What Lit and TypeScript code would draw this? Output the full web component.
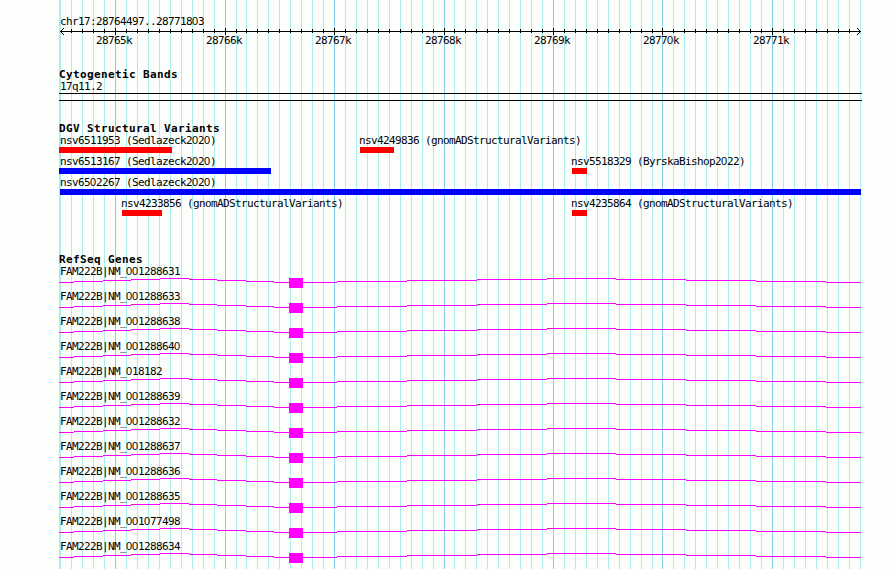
import { LitElement, html, svg, css } from "lit";
import { customElement } from "lit/decorators.js";
import { styleMap } from "lit/directives/style-map.js";

const WIDTH = 890;
const HEIGHT = 569;

// Pixel column of the n-th 100 bp mark, counted from 28,765,000.
const markX = (n: number) => 115 + 11 * n - Math.floor((n + 7) / 19);
const MARKS = Array.from({ length: 74 }, (_, i) => i - 5);

interface Feature { name: string; start: number; end: number; text: number; color: string; }

const ROWS: Feature[][] = [
  [
    { name: "nsv6511953 (Sedlazeck2020)", start: 59, end: 172, text: 60, color: "#ff0000" },
    { name: "nsv4249836 (gnomADStructuralVariants)", start: 360, end: 394, text: 359, color: "#ff0000" },
  ],
  [
    { name: "nsv6513167 (Sedlazeck2020)", start: 59, end: 271, text: 60, color: "#0000ff" },
    { name: "nsv5518329 (ByrskaBishop2022)", start: 572, end: 587, text: 571, color: "#ff0000" },
  ],
  [{ name: "nsv6502267 (Sedlazeck2020)", start: 60, end: 861, text: 60, color: "#0000ff" }],
  [
    { name: "nsv4233856 (gnomADStructuralVariants)", start: 122, end: 162, text: 121, color: "#ff0000" },
    { name: "nsv4235864 (gnomADStructuralVariants)", start: 572, end: 587, text: 571, color: "#ff0000" },
  ],
];

const GENES = [
  "NM_001288631", "NM_001288633", "NM_001288638", "NM_001288640", "NM_018182", "NM_001288639",
  "NM_001288632", "NM_001288637", "NM_001288636", "NM_001288635", "NM_001077498", "NM_001288634",
];

// Intron steps: [from, to, height above the base line]
const INTRON: [number, number, number][] = [
  [59, 74, 0], [74, 103, 1], [103, 131, 2], [131, 160, 3], [160, 189, 4],
  [189, 217, 3], [217, 246, 2], [246, 274, 1], [274, 289, 0],
  [303, 337, 0], [337, 407, 1], [407, 477, 2], [477, 547, 3], [547, 616, 4],
  [616, 686, 3], [686, 756, 2], [756, 826, 1], [826, 861, 0],
];

// Zeros are set in a face whose zero carries no inner mark.
const label = (s: string) =>
  s.split(/(0+)/).map((p) => (p.startsWith("0") ? html`<span class="zero">${p}</span>` : p));

const at = (x: number) => styleMap({ marginLeft: `${x}px` });

@customElement("app-root")
export class AppRoot extends LitElement {
  static styles = css`
    :host {
      display: block;
      position: relative;
      width: 890px;
      height: 569px;
      overflow: hidden;
      background: #fcfefc;
      color: #000;
      font: 11px/13px "DejaVu Sans Mono", monospace;
      letter-spacing: -0.622px;
    }
    svg { display: block; shape-rendering: crispEdges; }
    .grid { position: absolute; inset: 0; }
    .minor { fill: #aceeec; }
    .major { fill: #84ceec; }
    .exon { fill: #ff00ff; }
    .page { position: relative; display: flex; flex-direction: column; }
    .zero { font-family: "Liberation Sans", sans-serif; line-height: 0; letter-spacing: -0.117px; }
    .text { height: 13px; line-height: 13px; white-space: nowrap; }
    .inset { padding-left: 60px; }
    .scale { padding-top: 15px; }
    .ticks { margin: -1px 0 1px; }
    .overlay { display: grid; }
    .overlay > * { grid-area: 1 / 1; justify-self: start; }
    .title {
      margin: 0;
      padding-left: 59px;
      height: 12px;
      font-size: 11px;
      line-height: 13px;
      font-weight: bold;
      letter-spacing: 0.378px;
    }
    .bands { margin-top: 20px; }
    .band {
      box-sizing: border-box;
      width: 803px;
      height: 8px;
      margin-left: 59px;
      border: solid #000;
      border-width: 1px 0;
    }
    .variants { margin-top: 21px; }
    .rows { display: flex; flex-direction: column; gap: 2px; }
    .bar { height: 6px; }
    .genes { margin-top: 37px; }
  `;

  render() {
    return html`
      <svg class="grid" width=${WIDTH} height=${HEIGHT}>
        <rect class="minor" x="59" y="0" width="1" height=${HEIGHT}></rect>
        ${MARKS.map((n) => svg`<rect class=${n % 10 === 0 ? "major" : "minor"} x=${markX(n)} y="0" width="1" height=${HEIGHT}></rect>`)}
      </svg>
      <main class="page">
        <section class="scale">
          <div class="text inset">${label("chr17:28764497..28771803")}</div>
          <svg width=${WIDTH} height="7">
            <rect x="60" y="3" width="801" height="1"></rect>
            ${[0, 1, 2, 3].map((i) => svg`
              <rect x=${60 + i} y=${3 - i} width="1" height="1"></rect>
              <rect x=${60 + i} y=${3 + i} width="1" height="1"></rect>
              <rect x=${860 - i} y=${3 - i} width="1" height="1"></rect>
              <rect x=${860 - i} y=${3 + i} width="1" height="1"></rect>`)}
            ${MARKS.slice(1, -1).map((n) => n % 10 === 0
              ? svg`<rect x=${markX(n)} y="0" width="1" height="7"></rect>`
              : svg`<rect x=${markX(n)} y="1" width="1" height="4"></rect>`)}
          </svg>
          <div class="overlay ticks">
            ${[0, 1, 2, 3, 4, 5, 6].map((k) => html`<span class="text" style=${at(markX(k * 10) - 19)}>${label(`${28765 + k}k`)}</span>`)}
          </div>
        </section>
        <section class="bands">
          <h2 class="title">Cytogenetic Bands</h2>
          <div class="text inset">17q11.2</div>
          <div class="band"></div>
        </section>
        <section class="variants">
          <h2 class="title">DGV Structural Variants</h2>
          <div class="rows">
            ${ROWS.map((row) => html`<div class="overlay">
              ${row.map((f) => html`<div>
                <div class="text" style=${at(f.text)}>${label(f.name)}</div>
                <div class="bar" style=${styleMap({ marginLeft: `${f.start}px`, width: `${f.end - f.start}px`, background: f.color })}></div>
              </div>`)}
            </div>`)}
          </div>
        </section>
        <section class="genes">
          <h2 class="title">RefSeq Genes</h2>
          <div class="rows">
            ${GENES.map((g) => html`<div>
              <div class="text inset">${label(`FAM222B|${g}`)}</div>
              <svg width=${WIDTH} height="10">
                ${INTRON.map(([a, b, h]) => svg`<rect class="exon" x=${a} y=${4 - h} width=${b - a} height="1"></rect>`)}
                <rect class="exon" x="289" y="0" width="14" height="10"></rect>
              </svg>
            </div>`)}
          </div>
        </section>
      </main>
    `;
  }
}
